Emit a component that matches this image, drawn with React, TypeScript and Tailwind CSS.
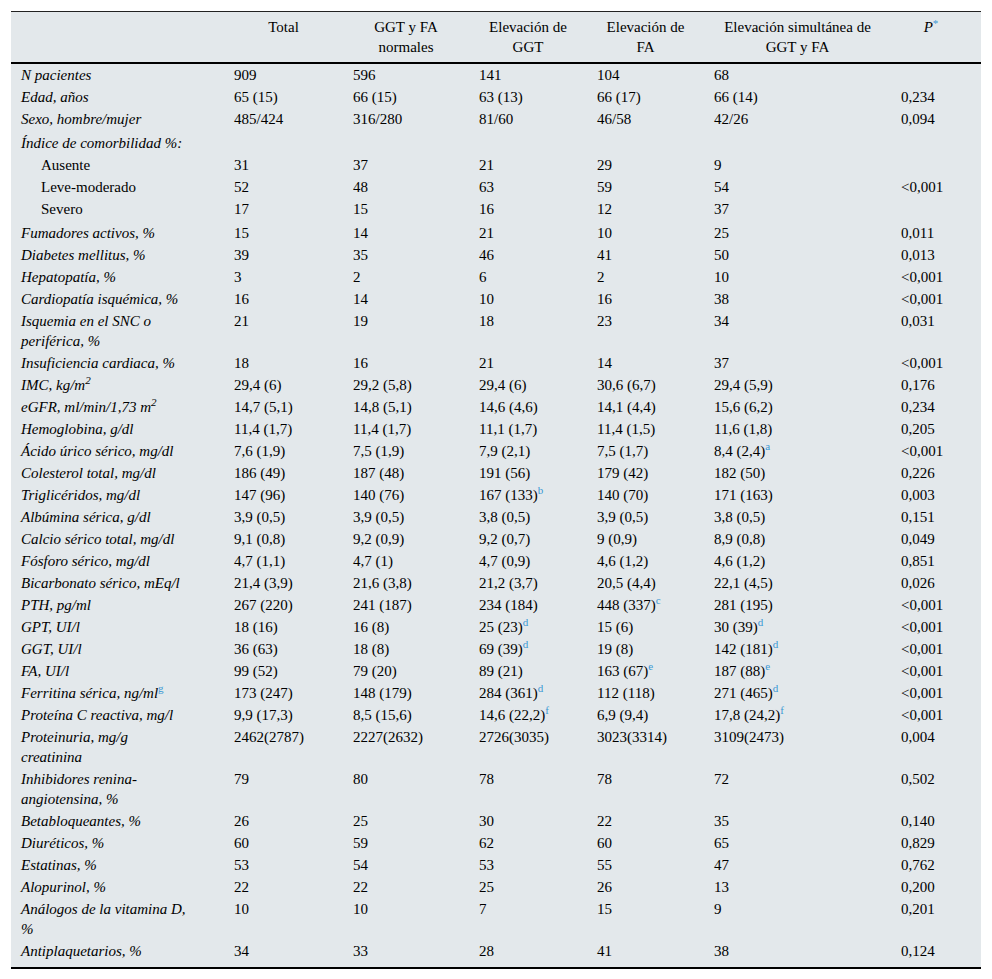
type Cell = { v: string; sup?: string };
type Row = { label: React.ReactNode; indent?: boolean; gap?: boolean; cells: (string | Cell)[]; p?: string };

const sup = (v: string, s: string): Cell => ({ v, sup: s });

const rows: Row[] = [
  { label: 'N pacientes', cells: ['909', '596', '141', '104', '68'] },
  { label: 'Edad, años', cells: ['65 (15)', '66 (15)', '63 (13)', '66 (17)', '66 (14)'], p: '0,234' },
  { label: 'Sexo, hombre/mujer', cells: ['485/424', '316/280', '81/60', '46/58', '42/26'], p: '0,094' },
  { label: 'Índice de comorbilidad %:', gap: true, cells: ['', '', '', '', ''] },
  { label: 'Ausente', indent: true, cells: ['31', '37', '21', '29', '9'] },
  { label: 'Leve-moderado', indent: true, cells: ['52', '48', '63', '59', '54'], p: '<0,001' },
  { label: 'Severo', indent: true, cells: ['17', '15', '16', '12', '37'] },
  { label: 'Fumadores activos, %', gap: true, cells: ['15', '14', '21', '10', '25'], p: '0,011' },
  { label: 'Diabetes mellitus, %', cells: ['39', '35', '46', '41', '50'], p: '0,013' },
  { label: 'Hepatopatía, %', cells: ['3', '2', '6', '2', '10'], p: '<0,001' },
  { label: 'Cardiopatía isquémica, %', cells: ['16', '14', '10', '16', '38'], p: '<0,001' },
  {
    label: (
      <>
        Isquemia en el SNC o<br />periférica, %
      </>
    ),
    cells: ['21', '19', '18', '23', '34'],
    p: '0,031',
  },
  { label: 'Insuficiencia cardiaca, %', cells: ['18', '16', '21', '14', '37'], p: '<0,001' },
  {
    label: (
      <>
        IMC, kg/m<sup className="text-[11px]">2</sup>
      </>
    ),
    cells: ['29,4 (6)', '29,2 (5,8)', '29,4 (6)', '30,6 (6,7)', '29,4 (5,9)'],
    p: '0,176',
  },
  {
    label: (
      <>
        eGFR, ml/min/1,73 m<sup className="text-[11px]">2</sup>
      </>
    ),
    cells: ['14,7 (5,1)', '14,8 (5,1)', '14,6 (4,6)', '14,1 (4,4)', '15,6 (6,2)'],
    p: '0,234',
  },
  { label: 'Hemoglobina, g/dl', cells: ['11,4 (1,7)', '11,4 (1,7)', '11,1 (1,7)', '11,4 (1,5)', '11,6 (1,8)'], p: '0,205' },
  { label: 'Ácido úrico sérico, mg/dl', cells: ['7,6 (1,9)', '7,5 (1,9)', '7,9 (2,1)', '7,5 (1,7)', sup('8,4 (2,4)', 'a')], p: '<0,001' },
  { label: 'Colesterol total, mg/dl', cells: ['186 (49)', '187 (48)', '191 (56)', '179 (42)', '182 (50)'], p: '0,226' },
  { label: 'Triglicéridos, mg/dl', cells: ['147 (96)', '140 (76)', sup('167 (133)', 'b'), '140 (70)', '171 (163)'], p: '0,003' },
  { label: 'Albúmina sérica, g/dl', cells: ['3,9 (0,5)', '3,9 (0,5)', '3,8 (0,5)', '3,9 (0,5)', '3,8 (0,5)'], p: '0,151' },
  { label: 'Calcio sérico total, mg/dl', cells: ['9,1 (0,8)', '9,2 (0,9)', '9,2 (0,7)', '9 (0,9)', '8,9 (0,8)'], p: '0,049' },
  { label: 'Fósforo sérico, mg/dl', cells: ['4,7 (1,1)', '4,7 (1)', '4,7 (0,9)', '4,6 (1,2)', '4,6 (1,2)'], p: '0,851' },
  { label: 'Bicarbonato sérico, mEq/l', cells: ['21,4 (3,9)', '21,6 (3,8)', '21,2 (3,7)', '20,5 (4,4)', '22,1 (4,5)'], p: '0,026' },
  { label: 'PTH, pg/ml', cells: ['267 (220)', '241 (187)', '234 (184)', sup('448 (337)', 'c'), '281 (195)'], p: '<0,001' },
  { label: 'GPT, UI/l', cells: ['18 (16)', '16 (8)', sup('25 (23)', 'd'), '15 (6)', sup('30 (39)', 'd')], p: '<0,001' },
  { label: 'GGT, UI/l', cells: ['36 (63)', '18 (8)', sup('69 (39)', 'd'), '19 (8)', sup('142 (181)', 'd')], p: '<0,001' },
  { label: 'FA, UI/l', cells: ['99 (52)', '79 (20)', '89 (21)', sup('163 (67)', 'e'), sup('187 (88)', 'e')], p: '<0,001' },
  {
    label: (
      <>
        Ferritina sérica, ng/ml<sup className="text-[11px] not-italic text-[#3a98d4]">g</sup>
      </>
    ),
    cells: ['173 (247)', '148 (179)', sup('284 (361)', 'd'), '112 (118)', sup('271 (465)', 'd')],
    p: '<0,001',
  },
  { label: 'Proteína C reactiva, mg/l', cells: ['9,9 (17,3)', '8,5 (15,6)', sup('14,6 (22,2)', 'f'), '6,9 (9,4)', sup('17,8 (24,2)', 'f')], p: '<0,001' },
  {
    label: (
      <>
        Proteinuria, mg/g<br />creatinina
      </>
    ),
    cells: ['2462(2787)', '2227(2632)', '2726(3035)', '3023(3314)', '3109(2473)'],
    p: '0,004',
  },
  {
    label: (
      <>
        Inhibidores renina-<br />angiotensina, %
      </>
    ),
    cells: ['79', '80', '78', '78', '72'],
    p: '0,502',
  },
  { label: 'Betabloqueantes, %', cells: ['26', '25', '30', '22', '35'], p: '0,140' },
  { label: 'Diuréticos, %', cells: ['60', '59', '62', '60', '65'], p: '0,829' },
  { label: 'Estatinas, %', cells: ['53', '54', '53', '55', '47'], p: '0,762' },
  { label: 'Alopurinol, %', cells: ['22', '22', '25', '26', '13'], p: '0,200' },
  {
    label: (
      <>
        Análogos de la vitamina D,<br />%
      </>
    ),
    cells: ['10', '10', '7', '15', '9'],
    p: '0,201',
  },
  { label: 'Antiplaquetarios, %', cells: ['34', '33', '28', '41', '38'], p: '0,124' },
];

const headers = [
  ['Total'],
  ['GGT y FA', 'normales'],
  ['Elevación de', 'GGT'],
  ['Elevación de', 'FA'],
  ['Elevación simultánea de', 'GGT y FA'],
];

function renderCell(c: string | Cell) {
  if (typeof c === 'string') return c;
  return (
    <>
      {c.v}
      <sup className="text-[11px] text-[#3a98d4] leading-none">{c.sup}</sup>
    </>
  );
}

export default function App() {
  return (
    <div
      className="bg-white pt-[11px] pl-[11px] w-[992px] min-h-[979px] text-[15px] leading-[20px] text-black"
      style={{ fontFamily: '"Liberation Serif", "Times New Roman", serif' }}
    >
      <table className="w-[970px] bg-[#e3e8eb] border-collapse table-fixed">
        <colgroup>
          <col className="w-[213px]" />
          <col className="w-[119px]" />
          <col className="w-[126px]" />
          <col className="w-[118px]" />
          <col className="w-[117px]" />
          <col className="w-[187px]" />
          <col className="w-[90px]" />
        </colgroup>
        <thead>
          <tr className="border-t border-[#222] border-b-2 border-b-black">
            <th className="h-[51px]" />
            {headers.map((h, i) => (
              <th key={i} className="font-normal text-center align-top pt-[5px] pb-[4px] px-[10px]">
                {h.map((line, j) => (
                  <div key={j}>{line}</div>
                ))}
              </th>
            ))}
            <th className="font-normal text-center align-top pt-[5px] pr-[10px]">
              <i>P</i>
              <sup className="text-[11px] text-[#3a98d4]">*</sup>
            </th>
          </tr>
        </thead>
        <tbody className="border-b-2 border-b-black">
          {rows.map((r, i) => {
            const py = `${r.gap ? 'pt-[3px]' : 'pt-[1px]'} ${i === rows.length - 1 ? 'pb-[6px]' : 'pb-[1px]'}`;
            return (
              <tr key={i} className="align-top">
                <td className={`${py} pr-[10px] ${r.indent ? 'pl-[30px]' : 'pl-[10px] italic'}`}>{r.label}</td>
                {r.cells.map((c, j) => (
                  <td key={j} className={`${py} px-[10px] whitespace-nowrap`}>
                    {renderCell(c)}
                  </td>
                ))}
                <td className={`${py} px-[10px] whitespace-nowrap`}>{r.p ?? ''}</td>
              </tr>
            );
          })}
        </tbody>
      </table>
    </div>
  );
}
